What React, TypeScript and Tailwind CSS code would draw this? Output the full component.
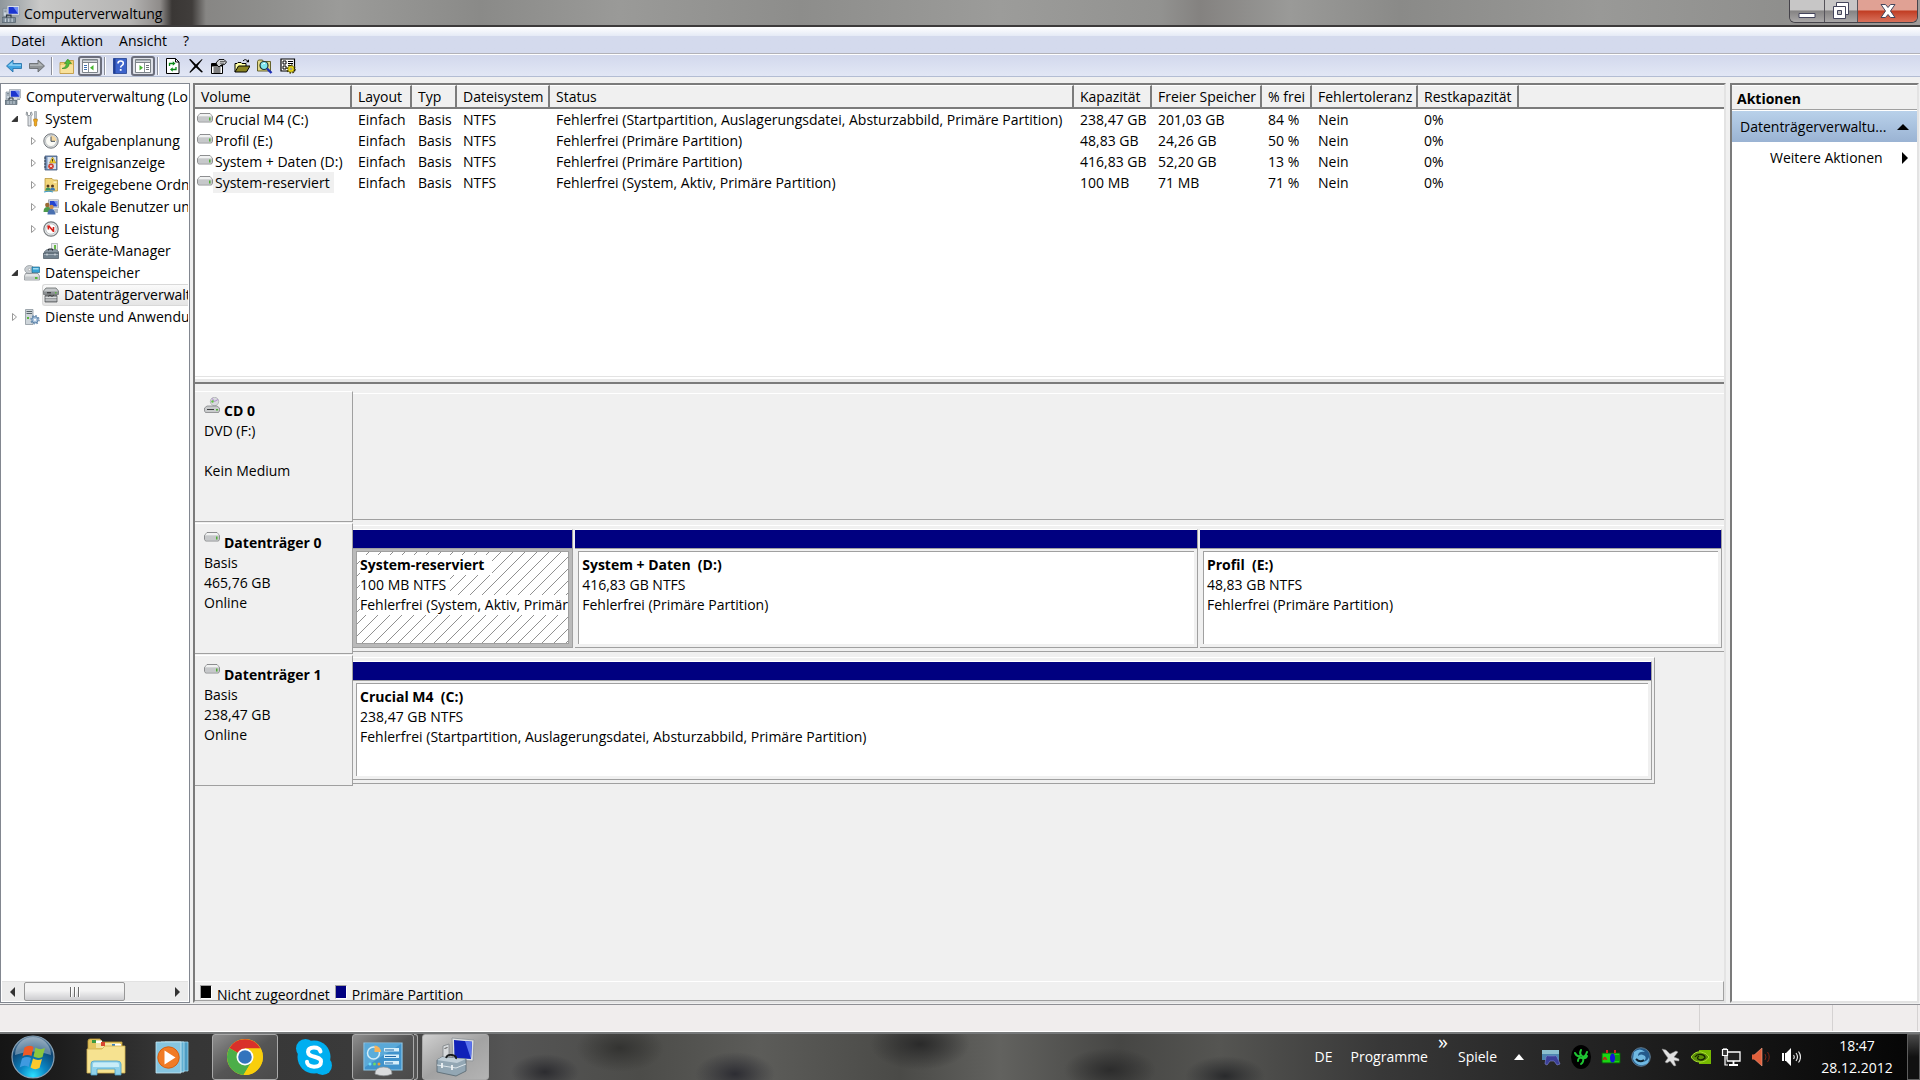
import type { ReactNode } from 'react';
import clsx from 'clsx';

type IconProps = { className?: string };

function Svg({
  className = 'w-4 h-4',
  box = '0 0 16 16',
  children,
}: {
  className?: string;
  box?: string;
  children: ReactNode;
}) {
  return (
    <svg viewBox={box} className={clsx('shrink-0', className)} aria-hidden="true">
      {children}
    </svg>
  );
}

const ComputerIcon = ({ className }: IconProps) => (
  <Svg className={className}>
    <path d="M1 3h4v7H1z" fill="#c9d3dc" stroke="#6c7a86" strokeWidth=".6" />
    <path d="M2 4.500h2M2 6h2" stroke="#5c6b78" strokeWidth=".7" />
    <path d="M4.500 .500h11v8.500h-11z" fill="#dfe4ea" stroke="#8a949e" strokeWidth=".6" />
    <path d="M5.800 1.800h8.500v6H5.800z" fill="#1b35cf" />
    <path d="M10 1.800h4.300v6z" fill="#6f8cf2" />
    <path d="M0 11h12v4.500H0z" fill="#7d8c98" stroke="#4d5b66" strokeWidth=".6" />
    <path d="M4 11V9h4v2" fill="none" stroke="#2e3942" strokeWidth="1" />
    <path d="M3 12v3M6 12v3M9 12v3" stroke="#c9d3db" strokeWidth="1" />
    <path d="M12 9.500h3v1.500h-3z" fill="#9aa5af" />
  </Svg>
);

const ToolsIcon = () => (
  <Svg>
    <path d="M2.500 1l1 .5V4l1.500.8L6.500 4V1.500L7.500 1l.8 2.500-1.300 2.200v9.300H4V5.700L2.200 3.500z" fill="#dde1e5" stroke="#70777d" strokeWidth=".7" />
    <path d="M10.500.500h2v7h-2z" fill="#bcc3c9" stroke="#7c848b" strokeWidth=".5" />
    <path d="M9.700 8h3.600v2l-.6 1v3.500q-1.200 1.500-2.400 0V11l-.6-1z" fill="#f0a81c" stroke="#a96d06" strokeWidth=".6" />
  </Svg>
);

const ClockIcon = () => (
  <Svg>
    <circle cx="8" cy="8" r="7.200" fill="#d9dde0" stroke="#75797c" strokeWidth="1" />
    <circle cx="8" cy="8" r="5.500" fill="#fbfbf6" stroke="#a7abad" strokeWidth=".6" />
    <path d="M8 8V2.500A5.500 5.500 0 0 1 13.500 8z" fill="#f3d7a2" />
    <path d="M8 3.500V8.300h4" fill="none" stroke="#444f58" strokeWidth="1" />
  </Svg>
);

const EventIcon = () => (
  <Svg>
    <path d="M2 1h12v14H2z" fill="#7390b7" stroke="#40577a" strokeWidth=".8" />
    <path d="M4.500 2h8.500v12H4.500z" fill="#d8e2ef" />
    <path d="M1 3h2M1 6h2M1 9h2M1 12h2" stroke="#333d4b" strokeWidth="1" />
    <path d="M9.500 2l3.500 6H6.500z" fill="#f6cf2c" stroke="#94750a" strokeWidth=".5" />
    <path d="M9.500 4v2.500" stroke="#222" strokeWidth=".9" />
    <circle cx="8" cy="11.200" r="2.800" fill="#d13c2c" />
    <path d="M7 10.200l2 2M9 10.200l-2 2" stroke="#fff" strokeWidth=".9" />
  </Svg>
);

const SharedIcon = () => (
  <Svg>
    <path d="M2 1.500h7l1.500 1.500H14.500v11H2z" fill="#f3d67c" stroke="#b08d2f" strokeWidth=".7" />
    <path d="M10.500 4.500h3v1.500h-3z" fill="#fff3c0" />
    <circle cx="5" cy="9" r="1.500" fill="#5a3b1e" />
    <path d="M2.500 13.500q0-3 2.500-3t2.500 3z" fill="#3e9660" />
    <circle cx="9.500" cy="9" r="1.500" fill="#5a3b1e" />
    <path d="M7 13.500q0-3 2.500-3t2.500 3z" fill="#3f79b5" />
    <path d="M1 15q5-1.500 9 0" stroke="#3d9cc4" strokeWidth="1.200" fill="none" />
  </Svg>
);

const UsersIcon = () => (
  <Svg>
    <path d="M5.500.800h10v8h-10z" fill="#e0e4e8" stroke="#8b949d" strokeWidth=".7" />
    <path d="M6.800 2h7.500v5.500H6.800z" fill="#2444cf" />
    <path d="M11 2h3.300v5.500z" fill="#7b94ef" />
    <circle cx="4.300" cy="6" r="2.200" fill="#9b6a32" />
    <path d="M.500 13q0-5 4-5t4 5z" fill="#4d9a4b" />
    <circle cx="8.500" cy="8" r="2.200" fill="#c98d4c" />
    <path d="M4.500 15.500q0-5.500 4-5.500t4 5.500z" fill="#4a70b0" />
    <path d="M11 10h4v4h-3z" fill="#b3bcc6" />
  </Svg>
);

const PerfIcon = () => (
  <Svg>
    <circle cx="8" cy="8" r="7.200" fill="#e6e8e9" stroke="#777b7e" strokeWidth="1.200" />
    <circle cx="8" cy="8" r="5.200" fill="#fff" stroke="#aeb3b6" strokeWidth=".7" />
    <path d="M5 4.500l.5 4M5.500 4.500l5 6M10.500 6v5" stroke="#d51f17" strokeWidth="1.600" fill="none" />
  </Svg>
);

const DeviceIcon = () => (
  <Svg>
    <path d="M8.500.500h6v9h-6z" fill="#e9ecee" stroke="#8e969c" strokeWidth=".6" />
    <path d="M11 2h2v4h-2z" fill="#65b843" />
    <path d="M1.500 8.500L4 6.500h9l2.500 2v1.500h-14z" fill="#8996a2" stroke="#4e5a64" strokeWidth=".6" />
    <path d="M5.500 7.500v-1.500h4v1.500" fill="none" stroke="#242b31" strokeWidth="1" />
    <path d="M.500 10h15v5.500H.500z" fill="#70808d" stroke="#46535e" strokeWidth=".7" />
    <path d="M1 11.500h14" stroke="#aebac4" strokeWidth=".8" />
    <path d="M4 10.500v2M12 10.500v2" stroke="#e3e8ec" strokeWidth="1" />
  </Svg>
);

const StorageIcon = () => (
  <Svg>
    <ellipse cx="5.500" cy="4.500" rx="4.800" ry="4" fill="#c9ced2" stroke="#80868b" strokeWidth=".6" />
    <circle cx="5.500" cy="4.500" r="1.200" fill="#fff" stroke="#888" strokeWidth=".5" />
    <path d="M8 2h7.500v5.500H8z" fill="#38a3d6" stroke="#22688b" strokeWidth=".7" />
    <path d="M9 3h5.500v1.500H9z" fill="#9edcf3" />
    <path d="M1.500 8.500h12.500l1.500 2.500v4H.500v-4z" fill="#e3e5e6" stroke="#7a8085" strokeWidth=".7" />
    <path d="M.800 11.500h14.400v3.200H.800z" fill="#c2c6c9" />
    <path d="M11 12h2.500v2H11z" fill="#52b936" />
  </Svg>
);

const DiskMgmtIcon = () => (
  <Svg>
    <path d="M3 1h10l2.500 3v3.500H.500V4z" fill="#c4c7c9" stroke="#66696b" strokeWidth=".8" />
    <path d="M.800 4.500h14.400v2.500H.800z" fill="#8c9093" />
    <path d="M4 5.800h4" stroke="#222" strokeWidth="1" />
    <path d="M12 5h1.500v1.500H12z" fill="#58b33c" />
    <path d="M2 8.500h12v6.500H2z" fill="#9a9da0" stroke="#55585a" strokeWidth=".8" />
    <path d="M2.500 10.500h11M2.500 13h11" stroke="#dfe1e2" strokeWidth=".9" />
    <path d="M5 9.500l2-1.500 2 1.500 2-1.500" fill="none" stroke="#333" strokeWidth=".8" />
  </Svg>
);

const ServicesIcon = () => (
  <Svg>
    <path d="M1.500.500h7.500v15H1.500z" fill="#ced5da" stroke="#7f8a92" strokeWidth=".7" />
    <path d="M2.500 2.500h5.500M2.500 4.500h5.500" stroke="#4c5960" strokeWidth=".9" />
    <path d="M3 8h2v2H3z" fill="#59b63c" />
    <circle cx="11" cy="10.800" r="3.200" fill="#a8c2dc" stroke="#5c82a8" strokeWidth="1" />
    <circle cx="11" cy="10.800" r="4.100" fill="none" stroke="#5c82a8" strokeWidth="1.200" strokeDasharray="1.600 1.600" />
    <circle cx="11" cy="10.800" r="1.100" fill="#fff" />
  </Svg>
);

const DriveIcon = () => (
  <Svg className="w-4 h-2.5" box="0 0 16 10">
    <path d="M3 .500h10l2.500 3v3.500l-1 2h-13L.500 7V3.500z" fill="#c9cbcc" stroke="#77797b" strokeWidth=".8" />
    <path d="M3 .900h10l2 2.400H1z" fill="#f1f2f2" />
    <path d="M1 4h14v3l-.7 1.500H1.700L1 7z" fill="#c6c8ca" />
    <path d="M12 4.500h1.500v3H12z" fill="#4eae35" />
  </Svg>
);

const CdIcon = () => (
  <Svg>
    <circle cx="10.500" cy="4.500" r="4.200" fill="#d8dadd" stroke="#999ca0" strokeWidth=".6" />
    <path d="M10.500 4.500L8 1.200M10.500 4.500l3.500-2" stroke="#b18ad0" strokeWidth="1" />
    <circle cx="8.500" cy="4.500" r="1.200" fill="#62bd47" />
    <path d="M3 9h10l2.500 2v3l-1 1.500h-13L.500 14v-3z" fill="#c9cbcc" stroke="#77797b" strokeWidth=".7" />
    <path d="M3 12.500h7" stroke="#3b3d3f" strokeWidth="1" />
    <path d="M12 12h2v1.500h-2z" fill="#4eae35" />
  </Svg>
);

const BackIcon = () => (
  <Svg>
    <path d="M.500 8L7 2v3.500h8.500v5H7V14z" fill="#41a5e1" stroke="#1c6ba5" strokeWidth=".8" />
    <path d="M2 7.800L6.500 4v2.500H15V8z" fill="#8fd0f3" />
  </Svg>
);

const ForwardIcon = () => (
  <Svg>
    <path d="M15.500 8L9 2v3.500H.500v5H9V14z" fill="#8f9396" stroke="#5f6366" strokeWidth=".8" />
    <path d="M14 7.800L9.500 4v2.500H1V8z" fill="#b4b8ba" />
  </Svg>
);

const FolderUpIcon = () => (
  <Svg>
    <path d="M1 4.500h6l1-2h6.500v13H1z" fill="#f0cf74" stroke="#bb9236" strokeWidth=".8" />
    <path d="M1.500 7h12.500v8H1.500z" fill="#f8e19b" />
    <path d="M3 10.500q4-.5 4.500-5H5.500L8.800 1l3.700 4.500h-2.300q-.5 6-7.200 5z" fill="#4fbb3c" stroke="#2d8422" strokeWidth=".6" />
  </Svg>
);

const PaneIcon = ({ flip }: { flip?: boolean }) => (
  <Svg>
    <path d="M.500 1.500h15v13H.500z" fill="#fff" stroke="#7d8489" strokeWidth="1" />
    <path d="M1 2h14v1.500H1z" fill="#a7aeb4" />
    <path d="M1 4.500h14" stroke="#7d8489" strokeWidth="1" />
    {flip ? (
      <>
        <path d="M9.500 5v9" stroke="#8b9298" />
        <path d="M11 7.500h3M11 9.500h3M11 11.500h3" stroke="#6a7278" />
        <path d="M4.500 7l3.500 2.700-3.500 2.700z" fill="#45b52f" />
      </>
    ) : (
      <>
        <path d="M6.500 5v9" stroke="#8b9298" />
        <path d="M2 7.500h3M2 9.500h3M2 11.500h3" stroke="#3c70b0" />
        <path d="M11.500 7L8 9.700l3.500 2.700z" fill="#45b52f" />
      </>
    )}
  </Svg>
);

const HelpIcon = () => (
  <Svg>
    <path d="M1.500.500h13v15h-13z" fill="#3c63cb" stroke="#22418f" strokeWidth=".8" />
    <path d="M1.500.500h2v15h-2z" fill="#203f94" />
    <path d="M6 5.500q0-2.500 2.700-2.500t2.600 2.300q0 1.400-1.300 2.100T8.700 9.500" fill="none" stroke="#fff" strokeWidth="1.600" />
    <path d="M7.800 11h1.800v1.800H7.800z" fill="#fff" />
  </Svg>
);

const RefreshIcon = () => (
  <Svg>
    <path d="M1.500.500h9l3.500 3.500v11.500H1.500z" fill="#fff" stroke="#000" />
    <path d="M10.500.500V4H14" fill="none" stroke="#000" />
    <path d="M4.500 8V5.500h4" fill="none" stroke="#0a8a18" strokeWidth="1.300" />
    <path d="M7.800 3.200l2.700 2.300-2.700 2.300zM7.700 9.200L5 11.500l2.700 2.300z" fill="#0a8a18" />
    <path d="M11 9v2.500H7" fill="none" stroke="#0a8a18" strokeWidth="1.300" />
  </Svg>
);

const DeleteIcon = () => (
  <Svg>
    <path d="M1 1.500l1.500-.5 5.500 5.500L14 1l.5.500L9.500 8l5.500 6-1.500.5L8 9.500 2 15l-.5-1L6.500 8z" fill="#000" />
  </Svg>
);

const PropertiesIcon = () => (
  <Svg>
    <path d="M.500 5.500h11v10H.500z" fill="#fff" stroke="#000" />
    <path d="M1 6h10v2.500H1z" fill="#000" />
    <path d="M2.500 10h7M2.500 12h7M2.500 14h7" stroke="#000" strokeWidth="1.200" />
    <path d="M5 5l3-3.500h5L15.500 4l-2 2.500-3.500.5-2 2L6 7z" fill="#cfd0d2" stroke="#000" strokeWidth=".9" />
    <path d="M9 3.500h5M9 5.200h4" stroke="#333" strokeWidth=".7" />
  </Svg>
);

const OpenIcon = () => (
  <Svg>
    <path d="M1 14V5.500h2l1-1h3l1 1h4V8" fill="#ffffa0" stroke="#000" />
    <path d="M1 14l3.500-6H16l-3.500 6z" fill="#8a8420" stroke="#000" />
    <path d="M9 3q2.500-3 5 .5" fill="none" stroke="#000" />
    <path d="M12 4.200h3V1.200z" fill="#000" />
  </Svg>
);

const SearchIcon = () => (
  <Svg>
    <path d="M.500 13V3.500l1-1.500h4l1 1.500h7V13z" fill="#e3d98a" stroke="#57531c" strokeWidth=".9" />
    <circle cx="7" cy="7.500" r="4" fill="#7fe6ee" stroke="#233" strokeWidth="1.200" />
    <path d="M5.500 6.500q1-1.500 2.500-1" stroke="#fff" fill="none" />
    <path d="M10 10.500l4.500 4.500" stroke="#1c2fb5" strokeWidth="2.400" />
  </Svg>
);

const SettingsIcon = () => (
  <Svg>
    <path d="M1 1h13.500v12H1z" fill="#fff" stroke="#000" strokeWidth="1.200" />
    <path d="M3 3h3v3H3zM3 8h3v3H3z" fill="none" stroke="#000" />
    <path d="M8 3.500h5M8 5.500h5M8 7.500h3" stroke="#000" />
    <circle cx="11" cy="11" r="3.900" fill="none" stroke="#3d3905" strokeWidth="1.700" strokeDasharray="1.600 1.400" />
    <circle cx="11" cy="11" r="3.200" fill="#f2e11b" stroke="#4b4508" strokeWidth=".5" />
    <circle cx="11" cy="11" r="1" fill="#fff" stroke="#000" strokeWidth=".4" />
  </Svg>
);

type TreeNode = {
  label: string;
  icon: ReactNode;
  level: number;
  arrow?: 'open' | 'closed';
  selected?: boolean;
};

const tree: TreeNode[] = [
  { label: 'Computerverwaltung (Lokal)', icon: <ComputerIcon />, level: 0 },
  { label: 'System', icon: <ToolsIcon />, level: 1, arrow: 'open' },
  { label: 'Aufgabenplanung', icon: <ClockIcon />, level: 2, arrow: 'closed' },
  { label: 'Ereignisanzeige', icon: <EventIcon />, level: 2, arrow: 'closed' },
  { label: 'Freigegebene Ordner', icon: <SharedIcon />, level: 2, arrow: 'closed' },
  { label: 'Lokale Benutzer und Gruppen', icon: <UsersIcon />, level: 2, arrow: 'closed' },
  { label: 'Leistung', icon: <PerfIcon />, level: 2, arrow: 'closed' },
  { label: 'Geräte-Manager', icon: <DeviceIcon />, level: 2 },
  { label: 'Datenspeicher', icon: <StorageIcon />, level: 1, arrow: 'open' },
  { label: 'Datenträgerverwaltung', icon: <DiskMgmtIcon />, level: 2, selected: true },
  { label: 'Dienste und Anwendungen', icon: <ServicesIcon />, level: 1, arrow: 'closed' },
];

const columns = [
  { label: 'Volume', width: 'w-[157px]' },
  { label: 'Layout', width: 'w-[60px]' },
  { label: 'Typ', width: 'w-[45px]' },
  { label: 'Dateisystem', width: 'w-[93px]' },
  { label: 'Status', width: 'w-[524px]' },
  { label: 'Kapazität', width: 'w-[78px]' },
  { label: 'Freier Speicher', width: 'w-[110px]' },
  { label: '% frei', width: 'w-[50px]' },
  { label: 'Fehlertoleranz', width: 'w-[106px]' },
  { label: 'Restkapazität', width: 'w-[101px]' },
];

const volumes = [
  ['Crucial M4 (C:)', 'Einfach', 'Basis', 'NTFS', 'Fehlerfrei (Startpartition, Auslagerungsdatei, Absturzabbild, Primäre Partition)', '238,47 GB', '201,03 GB', '84 %', 'Nein', '0%'],
  ['Profil (E:)', 'Einfach', 'Basis', 'NTFS', 'Fehlerfrei (Primäre Partition)', '48,83 GB', '24,26 GB', '50 %', 'Nein', '0%'],
  ['System + Daten (D:)', 'Einfach', 'Basis', 'NTFS', 'Fehlerfrei (Primäre Partition)', '416,83 GB', '52,20 GB', '13 %', 'Nein', '0%'],
  ['System-reserviert', 'Einfach', 'Basis', 'NTFS', 'Fehlerfrei (System, Aktiv, Primäre Partition)', '100 MB', '71 MB', '71 %', 'Nein', '0%'],
];

type Partition = {
  name: string;
  size: string;
  status: string;
  grow: string;
  selected?: boolean;
};

const disk0: Partition[] = [
  { name: 'System-reserviert', size: '100 MB NTFS', status: 'Fehlerfrei (System, Aktiv, Primäre Partition)', grow: 'grow-[220]', selected: true },
  { name: 'System + Daten  (D:)', size: '416,83 GB NTFS', status: 'Fehlerfrei (Primäre Partition)', grow: 'grow-[624]' },
  { name: 'Profil  (E:)', size: '48,83 GB NTFS', status: 'Fehlerfrei (Primäre Partition)', grow: 'grow-[523]' },
];

const disk1: Partition[] = [
  { name: 'Crucial M4  (C:)', size: '238,47 GB NTFS', status: 'Fehlerfrei (Startpartition, Auslagerungsdatei, Absturzabbild, Primäre Partition)', grow: 'grow' },
];

function TitleBar() {
  return (
    <header className="h-[27px] flex items-start justify-between border-b-2 border-[#3c3a3a] bg-[linear-gradient(90deg,#8f979c_0,#c9c9c8_40px,#b5b4b3_130px,#8f8c8a_160px,#3a3735_172px,#403d3b_192px,#878684_206px,#8e8e8c_260px,#9b9b99_340px,#8a8a88_480px,#9a9a98_620px,#8d8d8b_800px,#9c9c9a_1000px,#929290_1160px,#848280_1200px,#9a9a98_1290px,#8a8a88_1400px,#999997_1600px,#8f8f8d_1780px,#a09c9a_100%)]">
      <div className="flex items-center gap-1 h-7 pl-[2px]">
        <ComputerIcon className="w-[18px] h-[18px]" />
        <h1>Computerverwaltung</h1>
      </div>
      <div className="flex h-[23px] mr-[2px] rounded-b-md border border-t-0 border-[#45434a] overflow-hidden">
        <button aria-label="Minimieren" className="w-[35px] grid place-items-center border-r border-[#55535a] bg-linear-to-b from-[#c7c6c6] from-45% via-[#858383] via-50% to-[#a9a7a7]">
          <Svg className="w-5 h-5" box="0 0 20 20">
            <path d="M2 12.500h16v4H2z" fill="#fff" stroke="#44455c" />
          </Svg>
        </button>
        <button aria-label="Verkleinern" className="w-[33px] grid place-items-center border-r border-[#55535a] bg-linear-to-b from-[#c7c6c6] from-45% via-[#858383] via-50% to-[#a9a7a7]">
          <Svg className="w-5 h-5" box="0 0 20 20">
            <path d="M5.500 1.500h12v12h-12z" fill="#fff" stroke="#44455c" />
            <path d="M2.500 5.500h12v12h-12z" fill="#fff" stroke="#44455c" />
            <path d="M6.500 9.500h4v4h-4z" fill="#bbb" stroke="#44455c" />
          </Svg>
        </button>
        <button aria-label="Schließen" className="w-[59px] grid place-items-center bg-linear-to-b from-[#e0a194] from-45% via-[#c13c22] via-50% to-[#d8705a]">
          <Svg className="w-4 h-4">
            <path d="M1 1.500h4.500L8 4.500l2.500-3H15L10.500 8l4.500 6.500h-4.500L8 11.500l-2.500 3H1L5.500 8z" fill="#fff" stroke="#44455c" />
          </Svg>
        </button>
      </div>
    </header>
  );
}

function MenuBar() {
  return (
    <nav className="h-[27px] flex items-center pl-[3px] pt-[2px] border-b border-[#b2b2b8] bg-linear-to-b from-white from-0% via-[#e6ebf6] via-33% to-[#d4daed] to-34%">
      {['Datei', 'Aktion', 'Ansicht', '?'].map((item) => (
        <button key={item} className="px-2">
          {item}
        </button>
      ))}
    </nav>
  );
}

const Separator = () => <span className="w-px h-[18px] mx-px bg-[#8c8f9a] border-r border-white box-content" />;

function ToolButton({ label, pressed, children }: { label: string; pressed?: boolean; children: ReactNode }) {
  return (
    <button
      aria-label={label}
      className={clsx(
        'grid place-items-center h-5 rounded-[3px]',
        pressed ? 'w-6 -mx-[2px] border-2 border-[#6b6e7c] bg-[#dfe1e8]' : 'w-5'
      )}
    >
      {children}
    </button>
  );
}

function Toolbar() {
  return (
    <div className="h-[23px] flex items-center gap-[3px] pl-1 border-t border-b border-t-white border-b-[#b3bdd3] bg-linear-to-b from-[#d2d8ec] to-[#e2e7f5]">
      <ToolButton label="Zurück"><BackIcon /></ToolButton>
      <ToolButton label="Vorwärts"><ForwardIcon /></ToolButton>
      <Separator />
      <ToolButton label="Eine Ebene nach oben"><FolderUpIcon /></ToolButton>
      <ToolButton label="Konsolenstruktur" pressed><PaneIcon /></ToolButton>
      <Separator />
      <ToolButton label="Hilfe"><HelpIcon /></ToolButton>
      <ToolButton label="Aktionsbereich" pressed><PaneIcon flip /></ToolButton>
      <Separator />
      <ToolButton label="Aktualisieren"><RefreshIcon /></ToolButton>
      <ToolButton label="Löschen"><DeleteIcon /></ToolButton>
      <ToolButton label="Eigenschaften"><PropertiesIcon /></ToolButton>
      <ToolButton label="Öffnen"><OpenIcon /></ToolButton>
      <ToolButton label="Suchen"><SearchIcon /></ToolButton>
      <ToolButton label="Einstellungen"><SettingsIcon /></ToolButton>
    </div>
  );
}

function TreeArrow({ kind }: { kind?: 'open' | 'closed' }) {
  return (
    <Svg className="w-2 h-2.5" box="0 0 8 10">
      {kind === 'open' && <path d="M6.500 2v5.500H1z" fill="#333" stroke="#222" strokeWidth=".8" />}
      {kind === 'closed' && <path d="M1.500 1.500L5.500 5l-4 3.500z" fill="#fff" stroke="#999" />}
    </Svg>
  );
}

function TreePane() {
  return (
    <aside className="w-[190px] shrink-0 flex flex-col justify-between border border-[#828790] bg-white">
      <ul className="pt-[2px] pr-px overflow-hidden">
        {tree.map((node) => (
          <li
            key={node.label}
            className={clsx(
              'flex items-center h-[22px] whitespace-nowrap overflow-hidden',
              node.level === 0 && 'pl-1',
              node.level === 1 && 'pl-[10px]',
              node.level === 2 && 'pl-[29px]'
            )}
          >
            {node.level > 0 && <TreeArrow kind={node.arrow} />}
            <span
              className={clsx(
                'flex items-center gap-[5px] h-[22px] grow',
                node.level > 0 && 'ml-1',
                node.selected
                  ? 'rounded-l-[3px] border border-r-0 border-[#d9d9d9] bg-linear-to-b from-[#fafafa] to-[#e5e5e5]'
                  : node.level > 0 && 'pl-px'
              )}
            >
              {node.icon}
              <span>{node.label}</span>
            </span>
          </li>
        ))}
      </ul>
      <div className="h-5 mx-px mb-px flex items-center bg-[#ececec] border-t border-[#e2e2e2]">
        <button aria-label="Nach links" className="w-[22px] h-5 grid place-items-center">
          <Svg className="w-2 h-2.5" box="0 0 8 10"><path d="M6 0v10L1 5z" fill="#333" /></Svg>
        </button>
        <div className="w-[101px] h-[19px] grid place-items-center rounded-[2px] border border-[#979797] bg-linear-to-b from-[#f3f3f3] from-45% to-[#cdcdd0]">
          <Svg className="w-3 h-2.5" box="0 0 12 10">
            <path d="M1.500 0v10M5.500 0v10M9.500 0v10" stroke="#6b6b6b" />
            <path d="M2.500 0v10M6.500 0v10M10.500 0v10" stroke="#fff" />
          </Svg>
        </div>
        <button aria-label="Nach rechts" className="w-[22px] h-5 ml-auto grid place-items-center">
          <Svg className="w-2 h-2.5" box="0 0 8 10"><path d="M2 0v10l5-5z" fill="#333" /></Svg>
        </button>
      </div>
    </aside>
  );
}

function VolumeTable() {
  return (
    <div className="h-[291px] bg-white overflow-hidden">
      <table className="w-full table-fixed border-separate border-spacing-0 text-left whitespace-nowrap">
        <thead>
          <tr className="h-6">
            {columns.map((col) => (
              <th
                key={col.label}
                className={clsx(col.width, 'h-6 p-0 pl-[6px] pt-px font-normal bg-[#f0f0f0] border-b-2 border-r-2 border-t border-[#7b7b7b] border-t-white leading-5')}
              >
                {col.label}
              </th>
            ))}
            <th className="h-6 p-0 bg-[#f0f0f0] border-b-2 border-t border-b-[#7b7b7b] border-t-white" />
          </tr>
        </thead>
        <tbody>
          {volumes.map((row, i) => (
            <tr key={row[0]} className="h-[21px]">
              {row.map((cell, j) => (
                <td key={j} className={clsx('p-0 leading-[21px]', j === 0 ? 'pl-[2px]' : 'pl-[6px]')}>
                  {j === 0 ? (
                    <span className="flex items-center">
                      <span className="pb-[3px]"><DriveIcon /></span>
                      <span className={clsx('pl-[2px]', i === 3 && 'pr-1 bg-[#f0f0f0]')}>{cell}</span>
                    </span>
                  ) : (
                    cell
                  )}
                </td>
              ))}
              <td />
            </tr>
          ))}
        </tbody>
      </table>
    </div>
  );
}

function PartitionBox({ part }: { part: Partition }) {
  return (
    <div className={clsx('basis-0 min-w-0 flex flex-col border-r border-b border-t border-[#a0a0a0] border-t-white', part.grow)}>
      <div className="h-[19px] bg-[#000080] border-b border-[#a0a0a0]" />
      <div className={clsx('flex h-[98px] p-[3px] pt-[2px]', part.selected && 'bg-[#bababa]')}>
        <div
          className={clsx(
            'relative grow min-w-0 pl-[3px] pt-[3px] overflow-hidden whitespace-pre bg-white border-[#a0a0a0]',
            part.selected ? 'border' : 'border-l border-t'
          )}
        >
          {part.selected && (
            <svg className="absolute inset-0 w-full h-full" aria-hidden="true">
              <pattern id="hatch" width="12" height="12" patternUnits="userSpaceOnUse">
                <path d="M-1 13L13-1M-1 1L1-1M11 13L13 11" stroke="#909090" strokeWidth="1" />
              </pattern>
              <rect width="100%" height="100%" fill="url(#hatch)" />
            </svg>
          )}
          <div className="relative leading-5">
            <div className="w-fit pr-2 bg-white font-bold">{part.name}</div>
            <div className="w-fit pr-1 bg-white">{part.size}</div>
            <div className="w-fit bg-white">{part.status}</div>
          </div>
        </div>
      </div>
    </div>
  );
}

function DiskRow({
  name,
  lines,
  icon,
  parts,
  narrow,
}: {
  name: string;
  lines: string[];
  icon: ReactNode;
  parts?: Partition[];
  narrow?: boolean;
}) {
  return (
    <section className="flex h-[132px]">
      <div className="w-[158px] h-[131px] shrink-0 pl-[9px] pt-[5px] border-t border-b border-r border-[#a0a0a0] border-t-white leading-5">
        <h2 className="flex items-start h-6 gap-1 font-bold">
          {icon}
          <span className="pt-1">{name}</span>
        </h2>
        {lines.map((line, i) => (
          <p key={i} className="h-5">{line}</p>
        ))}
      </div>
      <div
        className={clsx(
          'grow h-[127px] mt-[2px] pt-[3px] flex border-t border-b border-[#a0a0a0] border-t-white',
          narrow && 'mr-[69px] border-r'
        )}
      >
        {parts && (
          <div className="grow flex gap-[2px] h-[119px] pr-[2px]">
            {parts.map((part) => (
              <PartitionBox key={part.name} part={part} />
            ))}
          </div>
        )}
      </div>
    </section>
  );
}

function DiskView() {
  return (
    <main className="grow min-w-0 ml-[3px] flex flex-col border-2 border-[#7b7b7b] border-r-[#e3e3e3] border-b-[#e3e3e3]">
      <VolumeTable />
      <div className="h-2 pt-[2px] border-t border-b-2 border-t-[#e3e3e3] border-b-[#7b7b7b] bg-white">
        <div className="h-full bg-[#e8e8e8]" />
      </div>
      <div className="grow flex flex-col pt-[7px] bg-[#f0f0f0]">
        <DiskRow name="CD 0" icon={<CdIcon />} lines={['DVD (F:)', '', 'Kein Medium']} />
        <DiskRow
          name="Datenträger 0"
          icon={<span className="pt-[3px]"><DriveIcon /></span>}
          lines={['Basis', '465,76 GB', 'Online']}
          parts={disk0}
        />
        <DiskRow
          name="Datenträger 1"
          icon={<span className="pt-[3px]"><DriveIcon /></span>}
          lines={['Basis', '238,47 GB', 'Online']}
          parts={disk1}
          narrow
        />
        <footer className="mt-auto h-5 flex items-start gap-[5px] pl-[5px] border-t border-b border-r border-[#a0a0a0] border-t-white">
          <span className="w-3 h-[14px] mt-[3px] border border-t-[#a0a0a0] border-l-[#a0a0a0] border-white bg-black" />
          <span className="leading-[26px]">Nicht zugeordnet</span>
          <span className="w-3 h-[14px] mt-[3px] border border-t-[#a0a0a0] border-l-[#a0a0a0] border-white bg-[#000080]" />
          <span className="leading-[26px]">Primäre Partition</span>
        </footer>
      </div>
    </main>
  );
}

function ActionsPane() {
  return (
    <aside className="w-[189px] shrink-0 ml-1 mr-px border-2 border-[#7b7b7b] border-r-[#e3e3e3] border-b-[#e3e3e3] bg-white">
      <h2 className="h-[25px] pl-[5px] leading-[25px] font-bold bg-[#f0f0f0] border-t border-b border-t-white border-b-[#a0a0a0]">
        Aktionen
      </h2>
      <button className="mt-px w-full h-[31px] flex items-center justify-between pl-2 pr-[8px] bg-linear-to-b from-[#b9d1ea] to-[#9ab3d3]">
        <span>Datenträgerverwaltu...</span>
        <Svg className="w-3 h-2" box="0 0 12 8"><path d="M0 7h12L6 1z" fill="#000" /></Svg>
      </button>
      <button className="w-full h-[31px] flex items-center justify-between pl-[38px] pr-[8px]">
        <span>Weitere Aktionen</span>
        <Svg className="w-2 h-3" box="0 0 8 12"><path d="M1 0v12l6-6z" fill="#000" /></Svg>
      </button>
    </aside>
  );
}

function StatusBar() {
  return (
    <div className="h-7 mt-px flex justify-end bg-[#f0eded] border-t border-b border-t-[#8f8f94] border-b-white">
      <span className="w-[133px] border-l border-[#d5d2d2]" />
      <span className="w-[85px] border-l border-[#d5d2d2]" />
      <span className="w-[3px] border-l border-[#d5d2d2]" />
    </div>
  );
}

const StartOrb = () => (
  <Svg className="w-11 h-11" box="0 0 44 44">
    <defs>
      <radialGradient id="orb" cx=".5" cy=".95" r=".9">
        <stop offset="0" stopColor="#2be0ff" />
        <stop offset=".35" stopColor="#0b86c4" />
        <stop offset=".75" stopColor="#0d4674" />
        <stop offset="1" stopColor="#5c7f9c" />
      </radialGradient>
    </defs>
    <circle cx="22" cy="22" r="21" fill="url(#orb)" stroke="#8aa4b8" strokeWidth="1.200" />
    <path d="M4 20a18 18 0 0 1 36 0q-18-7-36 0z" fill="#fff" opacity=".35" />
    <path d="M13.500 12.500q4.500-3 9-.5l-2 9q-4.500-2-9 .5z" fill="#ee5a26" />
    <path d="M24.500 12.500q4.500 3 9.500.5l-2.500 9q-4.500 2-9-.5z" fill="#8cc63f" />
    <path d="M11 23.500q4.500-2.500 9-.5l-2.300 9q-4.500-2.500-9 .5z" fill="#3f9ae0" />
    <path d="M22 23.500q4.500 2.500 9 .5l-2.500 9q-4.500 2.500-9-.5z" fill="#fcc92e" />
  </Svg>
);

const ExplorerIcon = () => (
  <Svg className="w-10 h-10" box="0 0 40 40">
    <path d="M2 4q0-2 2-2h10l2 3h20v30H2z" fill="#e3c55f" stroke="#c39f3a" strokeWidth=".8" />
    <path d="M6 3h4v3H6z" fill="#3f9b41" />
    <path d="M10 3.500h6V6h-6z" fill="#fff" />
    <path d="M10 6h24v5H10z" fill="#f4e4a0" />
    <path d="M15 5h4v4h-4z" fill="#d9452e" />
    <path d="M26 7h9v4h-9z" fill="#fff" />
    <path d="M26 7h3v4h-3z" fill="#3a82c4" />
    <path d="M1 12h15l3-3h20v27H1z" fill="#f6e290" stroke="#d2b350" strokeWidth=".8" />
    <path d="M5 38V27q0-3 3-3h23q4 0 4 3v11h-6V32H11v6z" fill="#8fd1ea" stroke="#4ba0c7" strokeWidth=".8" />
    <path d="M7 27q0-1.500 1.500-1.500h22q2.500 0 2.500 2V30H7z" fill="#c9edf8" />
  </Svg>
);

const MediaIcon = () => (
  <Svg className="w-[34px] h-[34px]" box="0 0 34 34">
    <path d="M10 2h23v29H10z" fill="#4d9dc4" stroke="#9cd3ea" strokeWidth=".8" />
    <path d="M6 2h23v30H6z" fill="#62b0d3" stroke="#b5e0f1" strokeWidth=".8" />
    <path d="M1 2h25v31H1z" fill="#86c5e0" stroke="#c6e8f5" strokeWidth=".8" />
    <circle cx="13.500" cy="17.500" r="10.700" fill="#f07b26" stroke="#d55f10" />
    <path d="M9.500 10.500l11 7-11 7z" fill="#fff" />
  </Svg>
);

const ChromeIcon = () => (
  <Svg className="w-[38px] h-[38px]" box="0 0 38 38">
    <circle cx="19" cy="19" r="18" fill="#f9ce0b" />
    <path d="M19 19L3.400 10A18 18 0 0 1 34.600 10.500H19z" fill="#d9302a" />
    <path d="M19 19L3.400 10A18 18 0 0 0 17.500 37l8.500-14z" fill="#4cae49" />
    <path d="M19 10.500h15.600A18 18 0 0 1 17.500 37l8.500-14z" fill="#f9ce0b" />
    <circle cx="19" cy="19" r="8.500" fill="#fff" />
    <circle cx="19" cy="19" r="6.800" fill="#3374bd" />
  </Svg>
);

const SkypeIcon = () => (
  <Svg className="w-[38px] h-[38px]" box="0 0 38 38">
    <circle cx="19" cy="19" r="16.500" fill="#00aff0" />
    <circle cx="10.500" cy="10.500" r="9.500" fill="#00aff0" />
    <circle cx="27.500" cy="27.500" r="9.500" fill="#00aff0" />
    <path d="M25.500 13.500q-1-4-6.500-4-6 0-6 4.500c0 6 13 3.500 13 9.500 0 4-3.500 5.200-7 5.200-5.200 0-7-2.700-7-5" fill="none" stroke="#fff" strokeWidth="4" strokeLinecap="round" />
  </Svg>
);

const ControlPanelIcon = () => (
  <Svg className="w-10 h-10" box="0 0 40 40">
    <path d="M1 6h38v27H1z" fill="#3f93cc" stroke="#8cc6e6" strokeWidth="1.200" />
    <path d="M2 7h36L2 30z" fill="#6db7e0" opacity=".6" />
    <circle cx="10.500" cy="16" r="6" fill="#5aaddb" stroke="#d3edf8" strokeWidth="1.500" />
    <path d="M11.500 15V8.500A6.500 6.500 0 0 1 18 15z" fill="#f6b35b" />
    <path d="M21 11h15v3.500H21zM21 17.500h15V21H21zM21 24h15v3.500H21z" fill="#d4eefa" />
    <path d="M22 13h9M22 19.500h11M22 26h8" stroke="#2369a5" strokeWidth="1.200" />
    <circle cx="7" cy="27" r="1.500" fill="#6ee3ff" />
    <circle cx="11.500" cy="27" r="1.500" fill="#6fd866" />
    <circle cx="16" cy="27" r="1.500" fill="#f39b35" />
    <path d="M12 37q0-7 8.500-7t8.500 7q-8 3.500-17 0z" fill="#dadcde" stroke="#8e9295" strokeWidth=".7" />
  </Svg>
);

const MgmtIcon = () => (
  <Svg className="w-10 h-10" box="0 0 40 40">
    <path d="M7 9l6-2v16l-6 1z" fill="#d7dadc" stroke="#7e8488" strokeWidth=".8" />
    <path d="M8.500 11.500l3-1" stroke="#555" />
    <path d="M16 1l22 2-1 21-20-1z" fill="#dde0e3" stroke="#8b9195" strokeWidth=".8" />
    <path d="M18 3l18 1.700L35 22l-16.500-1z" fill="#1020b8" />
    <path d="M29 4.100L36 4.700 35 22z" fill="#5b73ee" />
    <path d="M1 23l5-3 24 2v12l-10 5L1 35z" fill="#93a7b4" stroke="#56666f" strokeWidth=".8" />
    <path d="M1 23l5-3 24 2-9 4z" fill="#c0ced7" />
    <path d="M10 21q1-4 6-3t4 4" fill="none" stroke="#191c1e" strokeWidth="1.800" />
    <path d="M1 28l19 3 10-4" fill="none" stroke="#dce5ea" />
    <path d="M6 26v5M16 28v5" stroke="#eef2f4" strokeWidth="1.800" />
  </Svg>
);

function Task({ label, active, className, children }: { label: string; active?: 'dim' | 'bright'; className: string; children: ReactNode }) {
  return (
    <button
      aria-label={label}
      className={clsx(
        'h-[46px] shrink-0 grid place-items-center',
        active && 'rounded-[3px] border border-[#a9a9a9]',
        active === 'dim' && 'bg-linear-to-br from-[#8f8f8f] via-[#555] to-[#4a4a4a]',
        active === 'bright' && 'bg-linear-to-br from-[#d0d0d0] via-[#a2a2a2] to-[#b4b4b4]',
        className
      )}
    >
      {children}
    </button>
  );
}

function Tray() {
  return (
    <div className="flex items-center gap-[10px]">
      <Svg className="w-5 h-5" box="0 0 20 20">
        <path d="M1 3h17v10H1z" fill="#4d86b0" />
        <path d="M1 3h17v4H1z" fill="#8cc0cf" />
        <path d="M4 17l1-7q1-2 3-1h5q2-1 3 1l3 7-3 1-3-4H9l-3 4z" fill="#3b3f98" stroke="#8088d0" strokeWidth=".6" />
      </Svg>
      <Svg className="w-5 h-6" box="0 0 20 24">
        <ellipse cx="10" cy="12" rx="10" ry="12" fill="#000" />
        <path d="M4 8q2 4 5 3M10 5q-2 4 1 6t5-4M16 11q-1 3-5 2t-4 3M12 13q1 4-2 6" fill="none" stroke="#1fc433" strokeWidth="2" strokeLinecap="round" />
      </Svg>
      <Svg className="w-5 h-4" box="0 0 20 16">
        <path d="M1 4h18v10H1z" fill="#18d614" stroke="#0a560a" />
        <path d="M5 1h2v3H5zM13 1h2v3h-2z" fill="#c22" />
        <path d="M2.500 11q1-5 3 0" fill="none" stroke="#d01818" strokeWidth="1.600" />
        <ellipse cx="11.500" cy="9" rx="2.500" ry="4.500" fill="#1414d8" />
        <path d="M15 6v6M17 6v6" stroke="#061" strokeWidth="1" />
      </Svg>
      <Svg className="w-5 h-5" box="0 0 20 20">
        <circle cx="10" cy="10" r="9.300" fill="#235a8c" stroke="#5f7b90" />
        <path d="M3 5q6-5 11 0-7-1-7 4 3-3 7 0 2 3-2 6 5-1 6-5 1 7-6 8T2 12z" fill="#6fb9e2" />
        <path d="M5 12q4 4 8 1" stroke="#10222f" strokeWidth="2" fill="none" />
      </Svg>
      <Svg className="w-5 h-5" box="0 0 20 20">
        <path d="M1 2l4 1 4 4 6-3 2 1-4 5 5 2v2l-5-.5 2 5-2 .5-4-5-3 2-2-1 3-4-3-4z" fill="#e1e1e1" stroke="#8d8d8d" strokeWidth=".5" />
      </Svg>
      <Svg className="w-5 h-4" box="0 0 20 16">
        <path d="M8 1h12v14H8z" fill="#76b900" />
        <path d="M0 8q4-6 10-5t8 5q-3 5-9 5T0 8z" fill="#5c8f08" stroke="#a9e02f" />
        <path d="M4 8q2-3 6-2.500T14 9q-3 3-6 1.500T8 7" fill="none" stroke="#142300" strokeWidth="1.300" />
      </Svg>
      <Svg className="w-5 h-5" box="0 0 20 20">
        <path d="M6 5h13v9H6z" fill="#222" stroke="#fff" strokeWidth="1.300" />
        <path d="M8 18h9M12.500 14v4" stroke="#fff" strokeWidth="1.800" />
        <path d="M1.500 2.500h5v6h-5zM3 1v2M5 1v2M4 8.500V18H7" fill="#333" stroke="#fff" strokeWidth="1.200" />
      </Svg>
      <Svg className="w-5 h-5" box="0 0 20 20">
        <path d="M1 10L11 1v18z" fill="#e2603c" stroke="#f3a489" strokeWidth=".6" />
        <path d="M1 7.500h5v5H1z" fill="#e2603c" />
        <path d="M14 7q2 3 0 6M16.500 5q3.500 5 0 10" stroke="#7a2413" fill="none" />
      </Svg>
      <Svg className="w-5 h-5" box="0 0 20 20">
        <path d="M1 6h2v8H1zM4 6h1l5-5v18l-5-5H4z" fill="#fff" />
        <path d="M12.500 8q1.500 2 0 4M15 6q3 4 0 8M17.500 4.500q4 5.500 0 11" stroke="#e5e5e5" fill="none" strokeWidth="1.200" />
      </Svg>
    </div>
  );
}

function Taskbar() {
  return (
    <footer className="h-12 flex items-center justify-between text-white border-t-2 border-[#77797a] bg-[radial-gradient(ellipse_34px_18px_at_545px_38px,#2c2c30,transparent),radial-gradient(ellipse_44px_24px_at_620px_14px,#333331,transparent),radial-gradient(ellipse_40px_22px_at_735px_40px,#2d2d33,transparent),radial-gradient(ellipse_50px_26px_at_920px_10px,#2a2a2a,transparent),radial-gradient(ellipse_46px_22px_at_1110px_36px,#2c2c2c,transparent),radial-gradient(ellipse_40px_20px_at_1225px_42px,#292a2c,transparent),linear-gradient(90deg,#151515_0,#1d1d1d_60px,#353535_160px,#3a3a3a_350px,#555_510px,#4c4c49_640px,#5c5c59_760px,#4a4a47_900px,#62625f_1000px,#464644_1120px,#555552_1220px,#383838_1380px,#262626_1560px,#141414_1750px,#050505_100%)]">
      <div className="flex items-center">
        <button aria-label="Start" className="ml-[11px]"><StartOrb /></button>
        <Task label="Windows-Explorer" className="w-[66px] ml-[18px]"><ExplorerIcon /></Task>
        <Task label="Media Player" className="w-[66px]"><MediaIcon /></Task>
        <Task label="Chrome" active="dim" className="w-[66px] ml-[7px]"><ChromeIcon /></Task>
        <Task label="Skype" className="w-[66px] ml-[3px]"><SkypeIcon /></Task>
        <Task label="Systemsteuerung" active="dim" className="w-[62px] ml-[5px]"><ControlPanelIcon /></Task>
        <span className="w-1 h-[46px] rounded-r-[3px] border border-l-0 border-[#a9a9a9] bg-[#555]" />
        <Task label="Computerverwaltung" active="bright" className="w-[67px] ml-1"><MgmtIcon /></Task>
      </div>
      <div className="flex items-center h-full">
        <span className="mr-[18px]">DE</span>
        <a href="#programme">Programme</a>
        <span className="w-[30px] self-start text-center text-xl leading-4">»</span>
        <a href="#spiele">Spiele</a>
        <button aria-label="Ausgeblendete Symbole" className="mx-[17px]">
          <Svg className="w-2.5 h-1.5" box="0 0 10 6"><path d="M0 6h10L5 0z" fill="#fff" /></Svg>
        </button>
        <Tray />
        <time className="w-[98px] ml-[7px] text-center leading-[22px]">
          18:47
          <br />
          28.12.2012
        </time>
        <button aria-label="Desktop anzeigen" className="w-[13px] h-[46px] ml-px border border-[#5e5e5e] bg-linear-to-b from-[#4b4b4b] to-[#111] to-50%" />
      </div>
    </footer>
  );
}

export default function App() {
  return (
    <div className="min-h-screen flex flex-col bg-[#f0f0f0] text-black text-[14px] leading-5 font-['Open_Sans','Noto_Sans',sans-serif]">
      <TitleBar />
      <MenuBar />
      <Toolbar />
      <div className="grow flex pt-[6px]">
        <TreePane />
        <DiskView />
        <ActionsPane />
      </div>
      <StatusBar />
      <Taskbar />
    </div>
  );
}
